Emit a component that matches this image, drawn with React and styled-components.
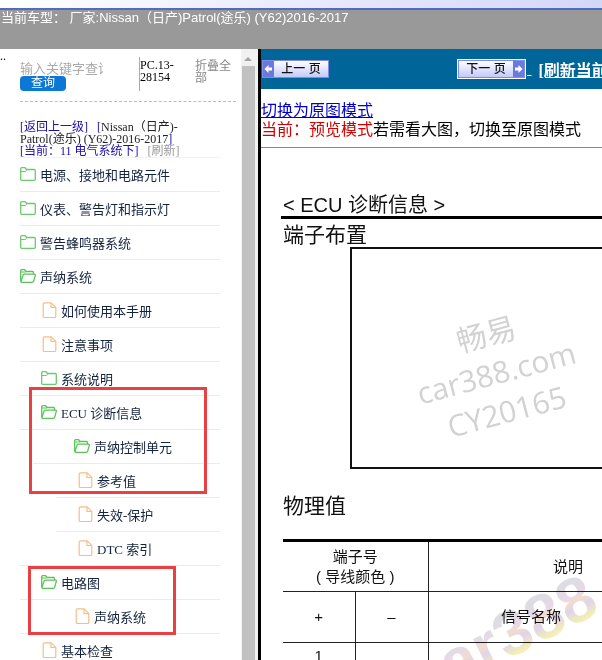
import React from "react";
import styled, { createGlobalStyle, css } from "styled-components";

const sans = `"Liberation Sans", "Noto Sans CJK SC", sans-serif`;
const serif = `"Liberation Serif", "Noto Sans CJK SC", serif`;

const tree = [
  { type: "folder", name: "电源、接地和电路元件", indent: 0 },
  { type: "folder", name: "仪表、警告灯和指示灯", indent: 0 },
  { type: "folder", name: "警告蜂鸣器系统", indent: 0 },
  { type: "open", name: "声纳系统", indent: 0 },
  { type: "file", name: "如何使用本手册", indent: 21 },
  { type: "file", name: "注意事项", indent: 21 },
  { type: "folder", name: "系统说明", indent: 21 },
  { type: "open", name: "ECU 诊断信息", indent: 21 },
  { type: "open", name: "声纳控制单元", indent: 54, inset: 13 },
  { type: "file", name: "参考值", indent: 57, inset: 36 },
  { type: "file", name: "失效-保护", indent: 57, inset: 36 },
  { type: "file", name: "DTC 索引", indent: 57 },
  { type: "open", name: "电路图", indent: 21 },
  { type: "file", name: "声纳系统", indent: 54 },
  { type: "file", name: "基本检查", indent: 21 },
];

const NodeIcon = ({ type }) => {
  if (type === "file") {
    return (
      <svg width="16" height="16" viewBox="0 0 16 16" fill="none" stroke="#f8bd85">
        <path d="M3.500 .8h6.600L14.800 5.400v8.800a1.300 1.300 0 0 1-1.300 1.300H3.500a1.300 1.300 0 0 1-1.300-1.300V2A1.300 1.300 0 0 1 3.500 .8z" strokeWidth="1.2" />
        <path d="M10 1v4.500H14.500" strokeWidth="1.2" />
      </svg>
    );
  }
  if (type === "open") {
    return (
      <svg width="16" height="16" viewBox="0 0 16 16" fill="none" stroke="#59c459">
        <path d="M.7 13.500V2.700Q.7 1.700 1.700 1.700H4.500L6.300 3.500H12.500Q13.500 3.500 13.500 4.500V6" strokeWidth="1.3" />
        <path d="M.8 4H6" />
        <path d="M4.300 6.200H14.500Q15.600 6.200 15.300 7.300L13.700 13.200Q13.400 14.300 12.300 14.300H1.700Q.7 14.300 1 13.200L3 7.200Q3.300 6.200 4.300 6.200z" strokeWidth="1.3" />
      </svg>
    );
  }
  return (
    <svg width="16" height="16" viewBox="0 0 16 16" fill="none" stroke="#6cc96c">
      <path d="M.7 13.300V2.700Q.7 1.700 1.700 1.700H5L6.600 3.500H14.300Q15.300 3.500 15.300 4.500V13.300Q15.300 14.300 14.300 14.300H1.700Q.7 14.300 .7 13.300z" strokeWidth="1.3" />
      <path d="M.8 5.500H5.500L7 3.600" />
    </svg>
  );
};

const PageArrow = ({ next }) => (
  <svg width="11" height="16" viewBox="0 0 11 16">
    <rect width="11" height="16" fill="#6b78e0" />
    <path
      d={next ? "M2 6.500H5.500V4L9.500 8L5.500 12V9.500H2z" : "M9 6.500H5.500V4L1.500 8L5.500 12V9.500H9z"}
      fill="#fff"
    />
  </svg>
);

const App = () => {
  return (
    <>
      <GlobalStyle />
      <StyledPage>
        <StyledTopStrip />
        <StyledHeader>
          当前车型： 厂家:Nissan（日产)Patrol(途乐) (Y62)2016-2017
        </StyledHeader>
        <StyledFrames>
          <StyledSidebar>
            <StyledGutter>..</StyledGutter>
            <StyledSidebarContent>
              <StyledTools>
                <StyledSearch onSubmit={(e) => e.preventDefault()}>
                  <StyledSearchInput aria-label="关键字" placeholder="输入关键字查询" />
                  <StyledSearchButton type="submit">查询</StyledSearchButton>
                </StyledSearch>
                <StyledCode>PC.13-28154</StyledCode>
                <StyledCollapse type="button">折叠全部</StyledCollapse>
              </StyledTools>
              <StyledCrumbs>
                <StyledCrumb href="#up">[返回上一级]</StyledCrumb>
                <StyledCrumbCar>
                  <StyledCrumb as="span">[</StyledCrumb>Nissan（日产)-
                </StyledCrumbCar>
                <br />
                Patrol(途乐) (Y62)-2016-2017<StyledCrumb as="span">]</StyledCrumb>
                <br />
                <StyledCrumb href="#current">[当前：11 电气系统下]</StyledCrumb>
                <StyledRefresh href="#refresh">[刷新]</StyledRefresh>
              </StyledCrumbs>
              <StyledTree>
                {tree.map((node, id) => (
                  <StyledNode key={id} $inset={node.inset || 0}>
                    <StyledNodeLink href="#node" $pad={node.indent - (node.inset || 0)}>
                      <NodeIcon type={node.type} />
                      {node.name}
                    </StyledNodeLink>
                  </StyledNode>
                ))}
                <StyledMark $top={229} $left={9} $width={178} $height={107} />
                <StyledMark $top={408} $left={8} $width={148} $height={69} />
              </StyledTree>
            </StyledSidebarContent>
          </StyledSidebar>
          <StyledScrollbar>
            <svg width="8" height="16" viewBox="0 0 8 16">
              <path d="M0 11L4 7L8 11z" fill="#a3a3a3" />
            </svg>
            <StyledThumb />
          </StyledScrollbar>
          <StyledMain>
            <StyledPager>
              <StyledPageButton type="button">
                <PageArrow />
                <span>上一 页</span>
              </StyledPageButton>
              <StyledNextGroup>
                <StyledPageButton type="button" $active>
                  <span>下一 页</span>
                  <PageArrow next />
                </StyledPageButton>
                <StyledSpaceLink href="#next">&nbsp;</StyledSpaceLink>
              </StyledNextGroup>
              <StyledReload href="#reload">[刷新当前页]</StyledReload>
            </StyledPager>
            <StyledMode>
              <a href="#original">切换为原图模式</a>
              <br />
              <em>当前：预览模式</em>若需看大图，切换至原图模式
            </StyledMode>
            <StyledDocument>
              <StyledTitle>&lt; ECU 诊断信息 &gt;</StyledTitle>
              <StyledSubtitle>端子布置</StyledSubtitle>
              <StyledFigure>
                <StyledStamp>
                  畅易
                  <br />
                  car388.com
                  <br />
                  CY20165
                </StyledStamp>
              </StyledFigure>
              <StyledSubtitle $spaced>物理值</StyledSubtitle>
              <StyledTable>
                <colgroup>
                  <col width="72" />
                  <col width="73" />
                  <col width="206" />
                  <col width="74" />
                </colgroup>
                <thead>
                  <tr>
                    <th colSpan="2">
                      端子号
                      <br />( 导线颜色 )
                    </th>
                    <th colSpan="2">说明</th>
                  </tr>
                </thead>
                <tbody>
                  <tr>
                    <td>+</td>
                    <td>–</td>
                    <td>信号名称</td>
                    <td />
                  </tr>
                  <tr>
                    <StyledTopCell>1</StyledTopCell>
                    <td />
                    <td />
                    <td />
                  </tr>
                </tbody>
              </StyledTable>
              <StyledWatermark>car388</StyledWatermark>
            </StyledDocument>
          </StyledMain>
        </StyledFrames>
      </StyledPage>
    </>
  );
};

const GlobalStyle = createGlobalStyle`
  * {
    box-sizing: border-box;
  }
  body {
    margin: 0;
    background: #fff;
    font-family: ${sans};
  }
`;
const StyledPage = styled.div`
  display: flex;
  flex-direction: column;
  height: 100vh;
  overflow: hidden;
`;
const StyledTopStrip = styled.div`
  flex: none;
  height: 10px;
  background: linear-gradient(to right, #fff, #d4d6f8);
  border-bottom: 2px solid #4f6cc4;
`;
const StyledHeader = styled.header`
  flex: none;
  height: 39px;
  padding-left: 1px;
  background: #999;
  color: #fff;
  font-size: 13px;
  line-height: 15px;
  white-space: nowrap;
`;
const StyledFrames = styled.div`
  flex: 1;
  min-height: 0;
  display: grid;
  grid-template-columns: 241px 20px 1fr;
`;
const StyledSidebar = styled.aside`
  display: flex;
  overflow: hidden;
  font-family: ${serif};
`;
const StyledGutter = styled.div`
  flex: none;
  width: 20px;
  font-size: 12px;
  line-height: 14px;
`;
const StyledSidebarContent = styled.div`
  flex: 1;
  min-width: 0;
`;
const StyledTools = styled.div`
  display: grid;
  grid-template-columns: 119px 56px 1fr;
  height: 53px;
  margin-right: 5px;
  padding: 8px 0 10px;
  border-bottom: 1px dashed #bbb;
  font-size: 12px;
  line-height: 12px;
`;
const StyledSearch = styled.form`
  display: flex;
  flex-direction: column;
  align-items: flex-start;
  padding-top: 4px;
`;
const StyledSearchInput = styled.input`
  width: 83px;
  height: 15px;
  padding: 0;
  border: 0;
  outline: 0;
  background: none;
  font-family: ${sans};
  font-size: 13px;
  &::placeholder {
    color: #aaa;
  }
`;
const StyledSearchButton = styled.button`
  width: 46px;
  height: 15px;
  padding: 0;
  border: 0;
  border-radius: 4px;
  background: #0a78d4;
  color: #fff;
  font-family: ${sans};
  font-size: 12px;
  line-height: 15px;
  cursor: pointer;
`;
const StyledCode = styled.div`
  width: 36px;
  padding-top: 2px;
  border-left: 1px solid #aaa;
`;
const StyledCollapse = styled.button`
  align-self: start;
  width: 36px;
  padding: 3px 0 0;
  border: 0;
  background: none;
  color: #888;
  font-family: inherit;
  font-size: 12px;
  line-height: 12px;
  text-align: left;
  cursor: pointer;
`;
const StyledCrumbs = styled.nav`
  padding-top: 19px;
  color: #222;
  font-size: 12px;
  line-height: 12px;
  white-space: nowrap;
`;
const StyledCrumb = styled.a`
  color: #1a0dab;
  text-decoration: none;
`;
const StyledCrumbCar = styled.span`
  margin-left: 9px;
`;
const StyledRefresh = styled.a`
  margin-left: 9px;
  color: #999;
  text-decoration: none;
`;
const StyledTree = styled.ul`
  position: relative;
  margin: 0 21px 0 0;
  padding: 0;
  border-top: 1px solid #f2f2f2;
  list-style: none;
`;
const StyledNode = styled.li`
  height: 34px;
  margin-left: ${({ $inset }) => $inset}px;
  border-bottom: 1px solid #ececec;
`;
const StyledNodeLink = styled.a`
  display: flex;
  align-items: center;
  gap: 4px;
  height: 32px;
  padding-left: ${({ $pad }) => $pad}px;
  color: #14233f;
  font-size: 13px;
  text-decoration: none;
  white-space: nowrap;
`;
const StyledMark = styled.div`
  position: absolute;
  top: ${({ $top }) => $top}px;
  left: ${({ $left }) => $left}px;
  width: ${({ $width }) => $width}px;
  height: ${({ $height }) => $height}px;
  border: 3px solid #e84043;
  pointer-events: none;
`;
const StyledScrollbar = styled.div`
  display: flex;
  flex-direction: column;
  align-items: center;
  padding: 1px 3px 0 0;
  background: #f1f1f1;
  border-right: 3px solid #000;
  border-image: linear-gradient(to right, #666 0 67%, #000 67%) 1;
`;
const StyledThumb = styled.div`
  flex: 1;
  width: 13px;
  background: #c1c1c1;
`;
const StyledMain = styled.main`
  min-width: 0;
  overflow: hidden;
`;
const StyledPager = styled.div`
  display: flex;
  align-items: center;
  height: 40px;
  padding-left: 1px;
  background: #006699;
  white-space: nowrap;
`;
const StyledPageButton = styled.button`
  display: flex;
  align-items: center;
  justify-content: space-between;
  flex: none;
  width: 67px;
  height: 18px;
  padding: 0;
  border: 1px solid #7f8ce6;
  background: linear-gradient(#fff, #c3cafa);
  color: #111;
  font-family: ${sans};
  font-size: 12px;
  font-weight: 500;
  line-height: 16px;
  cursor: pointer;
  span {
    flex: 1;
    text-align: center;
  }
  ${({ $active }) =>
    $active &&
    css`
      outline: 1px solid #fff;
    `}
`;
const StyledNextGroup = styled.div`
  display: flex;
  align-items: center;
  margin-left: 129px;
`;
const StyledSpaceLink = styled.a`
  margin-left: 2px;
  color: #fff;
`;
const StyledReload = styled.a`
  margin-left: 7px;
  color: #fff;
  font-family: ${serif};
  font-size: 16px;
  font-weight: bold;
`;
const StyledMode = styled.p`
  margin: 0;
  padding: 12px 0 8px;
  border-bottom: 1px solid #888;
  font-size: 16px;
  line-height: 19px;
  white-space: nowrap;
  a {
    color: #0000cc;
    text-decoration-skip-ink: none;
  }
  em {
    color: #d40000;
    font-style: normal;
  }
`;
const StyledDocument = styled.article`
  position: relative;
  padding: 47px 0 0 20px;
  color: #111;
  white-space: nowrap;
`;
const StyledTitle = styled.h1`
  margin: 0;
  padding-left: 2px;
  border-bottom: 3px solid #000;
  font-size: 20px;
  font-weight: normal;
  line-height: 21px;
`;
const StyledSubtitle = styled.h2`
  margin: ${({ $spaced }) => ($spaced ? "20px 0" : "0")};
  padding: 4px 0 0 2px;
  font-size: 21px;
  font-weight: normal;
  line-height: ${({ $spaced }) => ($spaced ? 26 : 24)}px;
`;
const StyledFigure = styled.div`
  display: flex;
  align-items: center;
  height: 222px;
  margin-left: 69px;
  padding: 30px 0 0 63px;
  border: 2px solid #111;
  border-right: 0;
`;
const StyledStamp = styled.div`
  color: #d2d2d2;
  font-family: "Open Sans", "Noto Sans CJK SC", sans-serif;
  font-size: 30px;
  line-height: 40px;
  text-align: center;
  transform: rotate(-15deg);
`;
const StyledTable = styled.table`
  table-layout: fixed;
  width: 425px;
  margin-left: 2px;
  border-collapse: collapse;
  border-top: 3px solid #000;
  font-size: 15px;
  line-height: 20px;
  text-align: center;
  tr {
    height: 51px;
  }
  th,
  td {
    padding: 0;
    border: 1px solid #222;
    font-weight: normal;
  }
  th {
    border-top: 3px solid #000;
  }
  th:first-child,
  td:first-child {
    border-left: 0;
  }
`;
const StyledTopCell = styled.td`
  && {
    padding-top: 3px;
    vertical-align: top;
  }
`;
const StyledWatermark = styled.div`
  position: absolute;
  top: 454px;
  left: 139px;
  font-size: 64px;
  font-weight: bold;
  line-height: 72px;
  color: transparent;
  background: linear-gradient(#c4c4d0 22%, #d8c0d8 42%, #ecc4a8 50%, #c8b8dc 60%, #ece484 78%);
  background-clip: text;
  opacity: 0.6;
  mix-blend-mode: multiply;
  transform: rotate(-27deg);
  pointer-events: none;
`;

export default App;
